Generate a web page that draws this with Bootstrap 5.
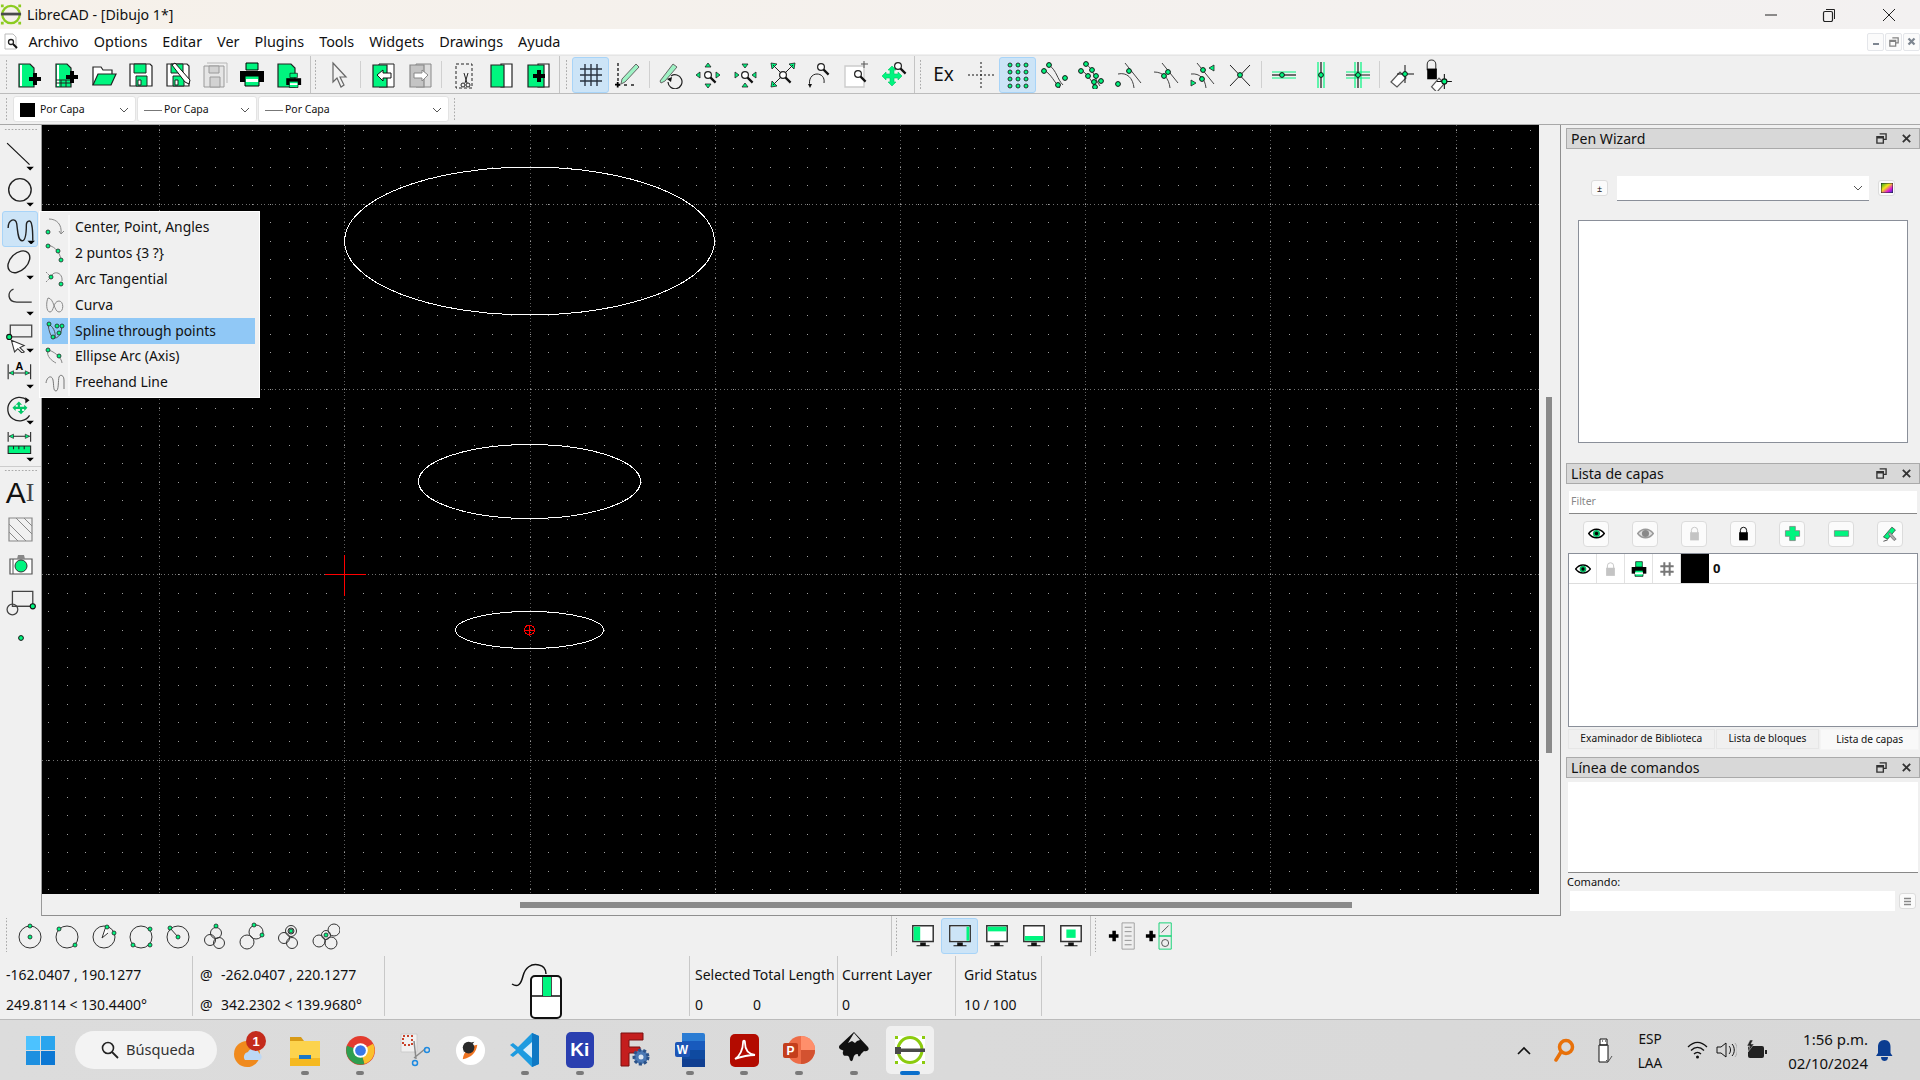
<!DOCTYPE html>
<html lang="es">
<head>
  <meta charset="UTF-8" />
  <title>LibreCAD - [Dibujo 1*]</title>
  <link href="https://cdn.jsdelivr.net/npm/bootstrap@5.3.0/dist/css/bootstrap.min.css" rel="stylesheet" />
  <style>
    html, body { height: 100%; overflow: hidden; }
    body { font-family: "Noto Sans", "Open Sans", sans-serif; font-size: 14px; color: #111; background: #f0f0f0; width: 1920px; height: 1080px; }
    svg { display: block; }
    .titlebar { height: 29px; background: linear-gradient(90deg, #f6f1ea, #f3f1f1); font-size: 14.2px; }
    .titlebar .win-title { margin-left: 5px; }
    .wctl { width: 58px; }
    .menubar { height: 25px; background: #fff; font-size: 14.4px; padding-left: 4px; gap: 15px; }
    .menu-ico { margin-right: -5.6px; }
    .subctl { width: 17px; height: 18px; border: 1px solid #e4e6ea; border-radius: 2px; margin-left: 1px; background: #fbfbfb; }
    .gapline { height: 2px; background: #f0f0f0; border-bottom: 1px solid #e5e5e5; }
    .bar1 { height: 38px; border-bottom: 1px solid #bcbcbc; padding-left: 2px; }
    .bar2 { height: 31px; border-bottom: 1px solid #a8a8a8; padding-left: 2px; }
    .grip { width: 3px; margin: 0 3px; align-self: stretch; background-image: radial-gradient(#aaa 0.8px, transparent 1px); background-size: 3px 3.4px; background-position: center; margin-top: 4px; margin-bottom: 4px; }
    .vline { width: 1px; align-self: stretch; background: #d0d0d0; margin: 5px 3px; }
    .vline.tall { margin: 0 3px; background: #c4c4c4; }
    .tbtn { width: 37px; height: 36px; padding: 0; border: 1px solid transparent; border-radius: 3px; display: flex; align-items: center; justify-content: center; flex: none; }
    .tbtn.on { background: #cce4f7; border-color: #a8d4f8; }
    .tbtn.vert { height: 36.3px; width: 36px; margin-left: 2px; }
    .tbtn.vert svg { margin-left: 2px; }
    .combo { height: 26px; background: #fff; border: 1px solid #e3e3e3; border-radius: 3px; font-size: 10.5px; padding: 2px 6px 0; margin-right: 1px; }
    .combo .swatch { width: 15px; height: 14px; background: #000; margin-right: 5px; }
    .combo .dash { width: 18px; height: 1px; background: #777; margin-right: 2px; }
    .main { height: 791px; }
    .leftbar { width: 42px; border-right: 1px solid #999; }
    .hgrip { height: 3px; margin: 3px 4px 7px; background-image: radial-gradient(#aaa 0.8px, transparent 1px); background-size: 3.4px 3px; }
    .hdiv { height: 1px; background: #fff; border-top: 1px solid #ccc; margin: 1px 0 2px; }
    .ai-glyph { font-size: 30px; font-family: "Liberation Sans", sans-serif; color: #111; line-height: 1; }
    .ai-glyph span { font-family: "Liberation Serif", serif; font-size: 26px; color: #444; }
    .cad-wrap { width: 1519px; border-right: 1px solid #8f8f8f; border-bottom: 1px solid #8f8f8f; }
    .hscroll { height: 21px; padding-left: 478px; padding-top: 8px; }
    .hthumb { width: 832px; height: 6px; background: #8a8a8a; }
    .vscroll { width: 22px; padding: 272px 0 0 7px; }
    .vthumb { width: 6px; height: 356px; background: #8a8a8a; }
    .dock { width: 354px; margin-left: 5px; padding-top: 3px; }
    .dock-title { height: 21px; background: #d8d8d8; border: 1px solid #aaa; padding: 0 7px 0 4px; font-size: 14.1px; gap: 14px; }
    .dock-title span:first-child { margin-right: auto; }
    .pen-body { height: 314px; padding-left: 12px; }
    .pen-tools { height: 71px; padding: 27px 13px 0 13px; gap: 9px; }
    .pen-tools .mini { margin-top: 4px; }
    .mini { width: 17px; height: 16px; border: 1px solid #dcdcdc; border-radius: 3px; background: #fbfbfb; font-size: 9px; line-height: 1; }
    .pen-combo { width: 252px; height: 25px; background: #fff; border-bottom: 1px solid #8a8f99; padding-right: 6px; }
    .pen-box { width: 330px; height: 223px; background: #fff; border: 1px solid #8a8f99; }
    .filter-row { padding: 7px 3px 0; }
    .filter-box { height: 23px; background: #fff; border-bottom: 1px solid #888; font-size: 10.5px; color: #888; padding-left: 2px; }
    .layer-tools { height: 39px; padding: 0 0 0 17px; gap: 23px; }
    .lbtn { width: 26px; height: 26px; border: 1px solid #dcdcdc; border-radius: 4px; background: #fbfbfb; }
    .layer-list { height: 174px; margin: 0 2px; background: #fff; border: 1px solid #8a8f99; }
    .layer-row { height: 30px; border-bottom: 1px solid #ddd; }
    .lcell { width: 28px; height: 29px; border-right: 1px solid #e2e2e2; flex: none; }
    .lcell.blk { background: #000; border: 0; }
    .lname { font-weight: 700; font-size: 13px; margin-left: 4px; }
    .dock-tabs { height: 30px; font-size: 10.2px; padding: 2px 0 0 2px; }
    .dtab { height: 20px; background: #f0f0f0; border: 1px solid #e6e6e6; margin-right: 1px; justify-content: center; }
    .dtab.act { background: #f9f9f9; height: 21px; border-color: #f4f4f4; }
    .cmd-out { height: 91px; margin: 4px 2px 0; background: #fff; border-bottom: 1px solid #888; }
    .cmd-label { font-size: 11px; height: 18px; padding: 1px 0 0 1px; }
    .cmd-in { padding-left: 4px; gap: 4px; }
    .cmd-input { width: 325px; height: 20px; background: #fff; }
    .bar3 { height: 40px; padding-left: 2px; }
    .bar3 .grip { margin-top: 2px; margin-bottom: 4px; }
    .statusbar { height: 64px; font-size: 14px; border-bottom: 1px solid #bbb; }
    .scell { height: 60px; border-right: 1px solid #c8c8c8; flex: none; padding-top: 8px; }
    .srow { height: 30px; white-space: nowrap; }
    .taskbar { height: 60px; background: linear-gradient(90deg, #dcdcdc, #d8d8d8); font-size: 14px; }
    .win-logo { margin-left: 26px; }
    .pill { width: 142px; height: 38px; background: #f3f3f3; border-radius: 19px; margin-left: 20px; margin-right: 6px; gap: 7px; padding-left: 26px; font-size: 14.6px; color: #333; }
    .tk { width: 54.9px; height: 48px; flex: none; position: relative; border-radius: 5px; }
    .tk.cur { background: #f0f0f0; width: 48px; margin-left: 4.4px; }
    .tk.run::after, .tk.cur::after { content: ""; position: absolute; bottom: -1px; left: 50%; width: 8px; height: 4px; margin-left: -4px; border-radius: 2px; background: #7a7a7a; }
    .tk.cur::after { width: 20px; margin-left: -10px; background: #0a6fcb; }
    .tray { margin-left: auto; height: 60px; }
    .lang { width: 60px; font-size: 13.6px; line-height: 24px; text-align: center; padding-top: 2px; }
    .clock { font-size: 15px; line-height: 24px; text-align: right; width: 92px; padding-top: 1px; }
    .cad-popup { position: absolute; left: 39px; top: 211px; width: 221px; height: 187px; min-width: 0; padding: 2.500px 4px 0 2px; margin: 0; background: #f0f0f0; border: 1px solid #fff; border-radius: 0; font-size: 13.9px; z-index: 5; }
    .cad-popup .dropdown-item { height: 25.9px; padding: 0; display: flex; align-items: center; color: #111; }
    .cad-popup .dropdown-item.active { background: #90c8f6; color: #111; }
    .cad-popup .pop-ico { width: 28px; height: 100%; margin-right: 5px; display: flex; align-items: center; justify-content: center; border-right: 2px solid #f8f8f8; flex: none; }
  </style>
</head>
<body class="d-flex flex-column">

<!-- icon set -->
<svg width="0" height="0" class="position-absolute">
  <defs>
    <g id="plus"><path d="M0 4h4V0h4v4h4v4H8v4H4V8H0z" fill="#000"/></g>
    <g id="mag"><circle cx="4" cy="4" r="3.4" fill="#fff" stroke="#222" stroke-width="1.2"/><path d="M6.6 6.6l5 5" stroke="#111" stroke-width="2.2"/></g>
    <g id="gd"><circle r="2.4" fill="#00f57f" stroke="#111" stroke-width="1"/></g>
    <g id="pt"><circle r="2" fill="#00f57f" stroke="#222" stroke-width=".8"/></g>
    <g id="disk"><path d="M3 3h20l2 2v20H3z" fill="#fff" stroke="#222" stroke-width="1.2"/><path d="M7 3h12v9H7z" fill="#00f57f" stroke="#222"/><path d="M9 15h11v10H9z" fill="#00f57f" stroke="#222"/><path d="M11 19h3v5h-3z" fill="#fff" stroke="#222"/></g>
    <g id="prn"><path d="M8 2h12v7H8z" fill="#00f57f" stroke="#000"/><path d="M2 10h24v11H2z" fill="#000"/><path d="M7 15h14v10H7z" fill="#00f57f" stroke="#000"/><path d="M8 18h12v3H8z" fill="#fff"/></g>
    <g id="page"><path d="M3 3h11l4 4v19H3z" fill="#00f57f" stroke="#222" stroke-width="1.2"/><path d="M4 4h2v21H4z" fill="#fff"/></g>
    <g id="mon"><path d="M3 3h22v17H3z" fill="#fff" stroke="#333" stroke-width="1.6"/><path d="M11 21h6v3h4v1H7v-1h4z" fill="#111"/></g>

    <symbol id="i-new" viewBox="0 0 28 28"><use href="#page"/><use href="#plus" x="13" y="12"/></symbol>
    <symbol id="i-tpl" viewBox="0 0 28 28"><use href="#page"/><path d="M3 19h15M3 22h15M8 19v7M13 19v7" stroke="#222" fill="none"/><use href="#plus" x="13" y="10"/></symbol>
    <symbol id="i-open" viewBox="0 0 28 28"><path d="M3 24V6h8l2 3h9v4" fill="#fff" stroke="#222" stroke-width="1.2"/><path d="M3 24l5-11h18l-5 11z" fill="#00f57f" stroke="#222" stroke-width="1.2"/></symbol>
    <symbol id="i-save" viewBox="0 0 28 28"><use href="#disk"/></symbol>
    <symbol id="i-saveas" viewBox="0 0 28 28"><use href="#disk"/><path d="M8 4l3-2 15 17-1 4-4-2z" fill="#fff" stroke="#111"/></symbol>
    <symbol id="i-saveall" viewBox="0 0 28 28"><g opacity=".55"><path d="M6 2h20v20" fill="none" stroke="#888"/><path d="M3 5h20v21H3z" fill="#ddd" stroke="#555"/><path d="M8 5h10v7H8zM9 16h10v10H9z" fill="#bbb" stroke="#555"/></g></symbol>
    <symbol id="i-print" viewBox="0 0 28 28"><use href="#prn"/></symbol>
    <symbol id="i-prev" viewBox="0 0 28 28"><path d="M3 3h13l4 4v19H3z" fill="#00f57f" stroke="#222" stroke-width="1.2"/><g transform="translate(10 11) scale(.62)"><use href="#prn"/></g></symbol>
    <symbol id="i-cur" viewBox="0 0 28 28"><path d="M8 2l13 14h-6l4 8-3 2-4-9-4 4z" fill="#f2f2f2" stroke="#666" stroke-width="1.2"/></symbol>
    <symbol id="i-tabp" viewBox="0 0 28 28"><path d="M10 3h15v23H10z" fill="#fff" stroke="#222"/><path d="M4 4h14v22H4z" fill="#00f57f" stroke="#222" stroke-width="1.2"/><path d="M8 14l6-5v3h8v5h-8v3z" fill="#fff" stroke="#111"/></symbol>
    <symbol id="i-tabn" viewBox="0 0 28 28"><path d="M10 3h15v23H10z" fill="#ddd" stroke="#888"/><path d="M4 4h14v22H4z" fill="#c4c4c4" stroke="#888" stroke-width="1.2"/><path d="M22 14l-6-5v3H8v5h8v3z" fill="#fff" stroke="#888"/></symbol>
    <symbol id="i-cut" viewBox="0 0 28 28"><path d="M6 3h16v24H6z" fill="none" stroke="#222" stroke-dasharray="3 2"/><path d="M14 12l3 10M18 12l-3 10" stroke="#222"/><circle cx="13" cy="24" r="2" fill="none" stroke="#222"/><circle cx="18" cy="24" r="2" fill="none" stroke="#222"/></symbol>
    <symbol id="i-copy" viewBox="0 0 28 28"><path d="M14 3h11v23H14z" fill="#fff" stroke="#222" stroke-width="1.2"/><path d="M4 4h13v22H4z" fill="#00f57f" stroke="#222" stroke-width="1.2"/></symbol>
    <symbol id="i-paste" viewBox="0 0 28 28"><path d="M14 3h11v23H14z" fill="#fff" stroke="#222" stroke-width="1.2"/><path d="M4 4h16v22H4z" fill="#00f57f" stroke="#222" stroke-width="1.2"/><use href="#plus" x="9" y="9"/></symbol>
    <symbol id="i-grid" viewBox="0 0 28 28"><path d="M8 3v22M14 3v22M20 3v22M3 8h22M3 14h22M3 20h22" stroke="#2a3340" stroke-width="1.4"/></symbol>
    <symbol id="i-draft" viewBox="0 0 28 28"><path d="M4 2v18M4 24h2M10 24h3M17 24h4" stroke="#222" stroke-width="1.4" stroke-dasharray="3 2" fill="none"/><path d="M8 18L22 3l3 3L11 21l-4 2z" fill="#9ef2c4" stroke="#666"/><use href="#plus" transform="translate(1 21) scale(.45)"/></symbol>
    <symbol id="i-redraw" viewBox="0 0 28 28"><path d="M2 20L15 3l4 3L7 20l-4 2z" fill="#9ef2c4" stroke="#666"/><path d="M13 15a7 7 0 1 1-3 6" fill="none" stroke="#222" stroke-width="1.2"/><path d="M9 18l5-2-1 5z" fill="#111"/></symbol>
    <symbol id="i-zin" viewBox="0 0 28 28"><path d="M13 2l-3 4h6zM13 27l-3-4h6zM1 14l4-3v6zM25 14l-4-3v6z" fill="#00f57f" stroke="#222" stroke-width=".8"/><g transform="translate(9 10)"><use href="#mag"/></g></symbol>
    <symbol id="i-zout" viewBox="0 0 28 28"><path d="M13 7l-3-4h6zM13 22l-3 4h6zM7 14l-4-3v6zM20 14l4-3v6z" fill="#00f57f" stroke="#222" stroke-width=".8"/><g transform="translate(9 10)"><use href="#mag"/></g></symbol>
    <symbol id="i-zauto" viewBox="0 0 28 28"><path d="M2 2l6 1-5 5zM26 2l-6 1 5 5zM2 26l1-6 5 5z" fill="#00f57f" stroke="#222" stroke-width=".8"/><path d="M4 4l7 7M24 4l-7 7M4 24l7-7" stroke="#222"/><g transform="translate(10 10)"><use href="#mag"/></g></symbol>
    <symbol id="i-zprev" viewBox="0 0 28 28"><path d="M4 25c-2-7 2-12 7-12 4 0 8 3 7 9" fill="none" stroke="#222"/><path d="M2 23h4l-2 4z" fill="#111"/><g transform="translate(11 2)"><use href="#mag"/></g></symbol>
    <symbol id="i-zwin" viewBox="0 0 28 28"><path d="M2 5h19v21H2z" fill="#fff" stroke="#ccc" stroke-width="1.4"/><path d="M21 0v7M18 3h7" stroke="#555"/><g transform="translate(11 9)"><use href="#mag"/></g></symbol>
    <symbol id="i-zpan" viewBox="0 0 28 28"><path d="M11 8l4 4h-2v4h4v-2l4 4-4 4v-2h-4v4h2l-4 4-4-4h2v-4H5v2l-4-4 4-4v2h4v-4H7z" fill="#00f57f" stroke="#00c866" stroke-width=".6" transform="translate(1 -3)"/><g transform="translate(14 1)"><use href="#mag"/></g></symbol>
    <symbol id="i-cross" viewBox="0 0 28 28"><path d="M14 1v26M1 14h26" stroke="#111" stroke-dasharray="2 2"/></symbol>
    <symbol id="i-snapg" viewBox="0 0 28 28"><g fill="#00f57f" stroke="#222" stroke-width=".9"><circle cx="6" cy="4" r="2"/><circle cx="14" cy="4" r="2"/><circle cx="22" cy="4" r="2"/><circle cx="6" cy="11" r="2"/><circle cx="14" cy="11" r="2"/><circle cx="22" cy="11" r="2"/><circle cx="6" cy="18" r="2"/><circle cx="14" cy="18" r="2"/><circle cx="22" cy="18" r="2"/><circle cx="6" cy="25" r="2"/><circle cx="14" cy="25" r="2"/><circle cx="22" cy="25" r="2"/></g></symbol>
    <symbol id="i-sn1" viewBox="0 0 28 28"><path d="M8 4c8 6 8 14 14 20M3 9c8 5 10 12 16 18" fill="none" stroke="#444"/><use href="#gd" x="8" y="4"/><use href="#gd" x="3" y="10"/><use href="#gd" x="24" y="17"/><use href="#gd" x="17" y="24"/></symbol>
    <symbol id="i-sn2" viewBox="0 0 28 28"><path d="M8 3c8 6 8 14 14 22M3 9c8 5 10 12 16 18" fill="none" stroke="#444"/><use href="#gd" x="8" y="3"/><use href="#gd" x="3" y="10"/><use href="#gd" x="14" y="9"/><use href="#gd" x="10" y="15"/><use href="#gd" x="18" y="15"/><use href="#gd" x="16" y="21"/><use href="#gd" x="23" y="20"/><use href="#gd" x="17" y="26"/></symbol>
    <symbol id="i-sn3" viewBox="0 0 28 28"><path d="M10 2l16 20M3 13c9-2 15 4 16 14" fill="none" stroke="#444"/><use href="#gd" x="14" y="10"/><use href="#gd" x="3" y="23"/></symbol>
    <symbol id="i-sn4" viewBox="0 0 28 28"><path d="M10 2l16 20M2 11c9 0 15 6 16 16" fill="none" stroke="#444"/><use href="#gd" x="16" y="11"/><use href="#gd" x="12" y="15"/></symbol>
    <symbol id="i-sn5" viewBox="0 0 28 28"><path d="M8 2l17 21M2 13c9-1 14 5 15 14" fill="none" stroke="#444"/><use href="#gd" x="14" y="9"/><use href="#gd" x="13" y="18"/><path d="M25 4l-5 3 5 3zM2 19l5 3-5 3z" fill="#00f57f" stroke="#222" stroke-width=".8"/></symbol>
    <symbol id="i-sn6" viewBox="0 0 28 28"><path d="M4 4l20 21M24 4L4 25" stroke="#222"/><use href="#gd" x="14" y="14"/></symbol>
    <symbol id="i-rh" viewBox="0 0 28 28"><path d="M2 11h24M2 17h24" stroke="#00f57f" stroke-width="1.2"/><path d="M2 14h24" stroke="#111" stroke-width="1.2"/><use href="#gd" x="12" y="14"/></symbol>
    <symbol id="i-rv" viewBox="0 0 28 28"><path d="M11 1v26M17 1v26" stroke="#00f57f" stroke-width="1.2"/><path d="M14 1v26" stroke="#111" stroke-width="1.2"/><use href="#gd" x="14" y="14"/></symbol>
    <symbol id="i-rc" viewBox="0 0 28 28"><path d="M2 11h24M2 17h24M11 1v26M17 1v26" stroke="#00f57f" stroke-width="1.2"/><path d="M2 14h24M14 1v26" stroke="#111" stroke-width="1.2"/><use href="#gd" x="14" y="14"/></symbol>
    <symbol id="i-rel" viewBox="0 0 28 28"><path d="M3 21l9-10 6 6-9 9z" fill="#fff" stroke="#555" stroke-width="1.2"/><path d="M17 4v18M9 13h17" stroke="#111"/><use href="#gd" x="17" y="13"/></symbol>
    <symbol id="i-rell" viewBox="0 0 28 28"><path d="M3 2a4 4 0 0 1 8 0v5H3z" fill="none" stroke="#333" transform="translate(0 2)"/><path d="M3 8h9v10H3z" fill="#000"/><path d="M7 25l7-8 5 5-7 8z" fill="#fff" stroke="#555" stroke-width="1.1"/><path d="M19 13v14M12 20h14" stroke="#111"/><use href="#gd" x="19" y="20"/></symbol>

    <symbol id="v-line" viewBox="0 0 28 28"><path d="M1 2l21 20" stroke="#111" stroke-width="1.1"/><path d="M19 24h7l-3.500 3.500z" fill="#000"/></symbol>
    <symbol id="v-circ" viewBox="0 0 28 28"><circle cx="13" cy="12" r="10.500" fill="none" stroke="#222" stroke-width="1.3"/><path d="M19 24h7l-3.500 3.500z" fill="#000"/></symbol>
    <symbol id="v-spl" viewBox="0 0 28 28"><path d="M2 13c0-8 7-10 8-4 1 7 1 16 5 16 4 0 4-12 4-15s4-6 5 0c1 4 1 11 1 15" fill="none" stroke="#222" stroke-width="1.3"/><path d="M20 25h7l-3.500 3.500z" fill="#000"/></symbol>
    <symbol id="v-ell" viewBox="0 0 28 28"><ellipse cx="12" cy="11" rx="12" ry="8" transform="rotate(-45 12 11)" fill="none" stroke="#222" stroke-width="1.3"/><path d="M19 24h7l-3.500 3.500z" fill="#000"/></symbol>
    <symbol id="v-poly" viewBox="0 0 28 28"><path d="M7 3c-6 2-6 12 3 12h14" fill="none" stroke="#333" stroke-width="1.3"/><path d="M19 24h7l-3.500 3.500z" fill="#000"/></symbol>
    <symbol id="v-sel" viewBox="0 0 28 28"><path d="M4 2h20v11H4z" fill="none" stroke="#444" stroke-width="1.2"/><use href="#gd" x="3" y="13"/><path d="M5 16l12 5-4 2 4 4-2 1-4-4-3 3z" fill="#fff" stroke="#333"/><path d="M19 24h7l-3.500 3.500z" fill="#000"/></symbol>
    <symbol id="v-dim" viewBox="0 0 28 28"><path d="M2 5v14M23 5v14M3 13h19" stroke="#222" fill="none"/><path d="M3 13l4-2v4zM22 13l-4-2v4z" fill="#00f57f" stroke="#222" stroke-width=".6"/><text x="12.500" y="10" font-size="10" font-weight="700" text-anchor="middle" font-family="Liberation Sans">A</text><path d="M19 24h7l-3.500 3.500z" fill="#000"/></symbol>
    <symbol id="v-mod" viewBox="0 0 28 28"><path d="M20 5A11 11 0 1 0 22 19" fill="none" stroke="#222" stroke-width="1.2"/><path d="M18 2l4 3-4 3z" fill="#111"/><path d="M12 6l3 3h-2v2h2v-2l0 2h2v-2l3 3-3 3v-2h-2v2h2l-3 3-3-3h2v-2H9v2l-3-3 3-3v2h2V9H9z" fill="#00c866"/><path d="M19 24h7l-3.500 3.500z" fill="#000"/></symbol>
    <symbol id="v-meas" viewBox="0 0 28 28"><path d="M2 0v9M23 0v9M3 4h19" stroke="#222" fill="none"/><path d="M3 4l4-2v4zM22 4l-4-2v4z" fill="#00f57f" stroke="#222" stroke-width=".6"/><path d="M2 13h21v7H2z" fill="#00f57f" stroke="#222"/><path d="M7 13v3M12 13v3M17 13v3" stroke="#222"/><path d="M19 24h7l-3.500 3.500z" fill="#000"/></symbol>
    <symbol id="v-hatch" viewBox="0 0 28 28"><path d="M2 3h23v23H2z" fill="none" stroke="#888" stroke-width="1.2"/><path d="M2 9l17 17M2 17l9 9M9 3l16 16M17 3l8 8" stroke="#888"/></symbol>
    <symbol id="v-img" viewBox="0 0 28 28"><path d="M3 8h22v15H3z" fill="#fff" stroke="#555" stroke-width="1.2"/><path d="M11 4h6l1 4h-8z" fill="#888"/><circle cx="14" cy="15" r="6" fill="#00f57f" stroke="#333"/><path d="M6 8v15" stroke="#555"/></symbol>
    <symbol id="v-blk" viewBox="0 0 28 28"><path d="M6 4h19v14H6z" fill="none" stroke="#444" stroke-width="1.2"/><circle cx="6" cy="21" r="5" fill="none" stroke="#444" stroke-width="1.2"/><path d="M6 18h19" stroke="#444"/><use href="#gd" x="25" y="18"/></symbol>
    <symbol id="v-pt" viewBox="0 0 28 28"><use href="#gd" x="14" y="14"/></symbol>

    <symbol id="c1" viewBox="0 0 28 28"><circle cx="14" cy="15" r="11" fill="none" stroke="#333"/><use href="#pt" x="14" y="15"/><use href="#pt" x="14" y="4"/></symbol>
    <symbol id="c2" viewBox="0 0 28 28"><circle cx="14" cy="15" r="11" fill="none" stroke="#333"/><use href="#pt" x="6" y="7"/><use href="#pt" x="22" y="23"/></symbol>
    <symbol id="c3" viewBox="0 0 28 28"><circle cx="14" cy="15" r="11" fill="none" stroke="#333"/><path d="M16 4l-4 12 6-5" fill="#fff" stroke="#333"/><use href="#pt" x="17" y="5"/><use href="#pt" x="24" y="11"/></symbol>
    <symbol id="c4" viewBox="0 0 28 28"><circle cx="14" cy="15" r="11" fill="none" stroke="#333"/><use href="#pt" x="23" y="7"/><use href="#pt" x="6" y="23"/><use href="#pt" x="23" y="23"/></symbol>
    <symbol id="c5" viewBox="0 0 28 28"><circle cx="14" cy="15" r="11" fill="none" stroke="#333"/><path d="M6 6l8 9" stroke="#333"/><use href="#pt" x="6" y="6"/><use href="#pt" x="14" y="15"/></symbol>
    <symbol id="c6" viewBox="0 0 28 28"><g fill="none" stroke="#333"><circle cx="15" cy="11" r="5.500"/><circle cx="9" cy="18" r="5.500"/><circle cx="18" cy="21" r="5.500"/></g><use href="#pt" x="15" y="4"/></symbol>
    <symbol id="c7" viewBox="0 0 28 28"><g fill="none" stroke="#333"><circle cx="9" cy="20" r="7"/><circle cx="18" cy="10" r="7"/></g><use href="#pt" x="16" y="3"/><use href="#pt" x="24" y="13"/></symbol>
    <symbol id="c8" viewBox="0 0 28 28"><g fill="none" stroke="#333"><circle cx="16" cy="9" r="5.500"/><circle cx="16" cy="9" r="3"/><circle cx="9" cy="16" r="5.500"/><circle cx="17" cy="21" r="5.500"/></g><use href="#pt" x="16" y="9"/></symbol>
    <symbol id="c9" viewBox="0 0 28 28"><g fill="none" stroke="#333"><circle cx="22" cy="8" r="6"/><circle cx="7" cy="19" r="6"/><circle cx="19" cy="21" r="6"/><circle cx="14" cy="13" r="4.500"/></g><use href="#pt" x="14" y="13"/></symbol>

    <symbol id="m-left" viewBox="0 0 28 28"><use href="#mon"/><path d="M4 4h7v15H4z" fill="#00f57f"/></symbol>
    <symbol id="m-right" viewBox="0 0 28 28"><use href="#mon"/><path d="M4 4h20v15H4z" fill="#cce4f7"/><path d="M21 4h3v15h-3z" fill="#00f57f"/></symbol>
    <symbol id="m-top" viewBox="0 0 28 28"><use href="#mon"/><path d="M4 4h20v5H4z" fill="#00f57f"/></symbol>
    <symbol id="m-bot" viewBox="0 0 28 28"><use href="#mon"/><path d="M4 14h20v5H4z" fill="#00f57f"/></symbol>
    <symbol id="m-ctr" viewBox="0 0 28 28"><use href="#mon"/><path d="M9 7h10v9H9z" fill="#00f57f"/></symbol>
    <symbol id="a-list" viewBox="0 0 32 32"><path d="M1 12h4V8h4v4h3v4H9v4H5v-4H1z" fill="#000" transform="translate(0 2)"/><path d="M16 1h14v30H16z" fill="#eee" stroke="#999"/><path d="M19 6h8M19 11h8M19 16h8M19 21h8M19 26h8" stroke="#888"/></symbol>
    <symbol id="a-tb" viewBox="0 0 32 32"><path d="M1 12h4V8h4v4h3v4H9v4H5v-4H1z" fill="#000" transform="translate(0 2)"/><path d="M16 1h14v15H16zM16 16h14v15H16z" fill="#eee" stroke="#00d06a"/><path d="M19 12l8-8" stroke="#444"/><circle cx="23" cy="24" r="4" fill="none" stroke="#444"/></symbol>

    <symbol id="p-arc" viewBox="0 0 20 20"><path d="M4 2c8 0 13 6 12 14" fill="none" stroke="#888"/><path d="M14 14l2 3 3-3" fill="none" stroke="#888"/><use href="#pt" x="3" y="15"/></symbol>
    <symbol id="p-2p" viewBox="0 0 20 20"><path d="M3 2c8 2 12 8 13 15" fill="none" stroke="#888"/><use href="#pt" x="3" y="3"/><use href="#pt" x="13" y="8"/><use href="#pt" x="16" y="17"/></symbol>
    <symbol id="p-tan" viewBox="0 0 20 20"><path d="M1 3l5 5M1 13l5-5" stroke="#888" stroke-dasharray="2 1"/><path d="M6 8c2-7 12-5 11 4" fill="none" stroke="#888"/><use href="#pt" x="6" y="8"/><use href="#pt" x="16" y="15"/></symbol>
    <symbol id="p-curv" viewBox="0 0 20 20"><path d="M3 3c6 0 6 14 11 14 5 0 5-11 0-11-6 0-5 11-9 11S1 7 3 3z" fill="none" stroke="#888"/></symbol>
    <symbol id="p-spl" viewBox="0 0 20 20"><path d="M3 3c1 8 3 14 7 14S18 10 16 5" fill="none" stroke="#555"/><path d="M3 3c5 2 8 8 7 14" fill="none" stroke="#555"/><use href="#pt" x="4" y="3"/><use href="#pt" x="12" y="5"/><use href="#pt" x="17" y="5"/><use href="#pt" x="8" y="16"/><use href="#pt" x="14" y="12"/></symbol>
    <symbol id="p-ela" viewBox="0 0 20 20"><path d="M2 3c6 0 15 8 15 13" fill="none" stroke="#888"/><path d="M3 4c-2 5 4 10 8 12" fill="none" stroke="#888"/><use href="#pt" x="3" y="3"/><use href="#pt" x="14" y="9"/></symbol>
    <symbol id="p-free" viewBox="0 0 20 20"><path d="M1 10c1-7 6-8 7-3s0 11 3 11 2-11 3-14 5-2 5 3v9" fill="none" stroke="#777"/></symbol>

    <symbol id="l-eye" viewBox="0 0 24 24"><path d="M1 12c6-8 16-8 22 0-6 8-16 8-22 0z" fill="#fff" stroke="#000" stroke-width="2"/><circle cx="12" cy="12" r="5" fill="#00b860"/><circle cx="12" cy="12" r="2.500" fill="#000"/></symbol>
    <symbol id="l-eyeg" viewBox="0 0 24 24"><path d="M1 12c6-8 16-8 22 0-6 8-16 8-22 0z" fill="#ddd" stroke="#999" stroke-width="2"/><circle cx="12" cy="12" r="5" fill="#888"/></symbol>
    <symbol id="l-lockg" viewBox="0 0 24 24"><path d="M7 11V7a5 5 0 0 1 10 0v4" fill="none" stroke="#c4c4c4" stroke-width="1.500"/><path d="M5 10h14v13H5z" fill="#c4c4c4"/></symbol>
    <symbol id="l-lock" viewBox="0 0 24 24"><path d="M7 11V7a5 5 0 0 1 10 0v4" fill="none" stroke="#000" stroke-width="1.500"/><path d="M5 10h14v13H5z" fill="#000"/></symbol>
    <symbol id="l-add" viewBox="0 0 24 24"><path d="M8 2h8v6h6v8h-6v6H8v-6H2V8h6z" fill="#00f57f" stroke="#777"/></symbol>
    <symbol id="l-rem" viewBox="0 0 24 24"><path d="M2 8h20v8H2z" fill="#00f57f" stroke="#777"/></symbol>
    <symbol id="l-edit" viewBox="0 0 24 24"><path d="M2 17L14 3l5 4-11 13z" fill="#00f57f" stroke="#333"/><path d="M11 10l9 10-3 2-8-9z" fill="#aaa" stroke="#666"/><path d="M2 23l6-2" stroke="#111"/></symbol>
    <symbol id="l-prn" viewBox="0 0 24 24"><path d="M7 1h10v8H7z" fill="#00f57f" stroke="#000"/><path d="M1 9h22v10H1z" fill="#000"/><path d="M6 14h12v9H6z" fill="#00f57f" stroke="#000"/><path d="M6 17h12v3H6z" fill="#fff"/></symbol>
    <symbol id="l-hash" viewBox="0 0 24 24"><path d="M8 2v20M16 2v20M2 8h20M2 16h20" stroke="#777" stroke-width="3"/></symbol>
    <symbol id="d-float" viewBox="0 0 12 12"><path d="M4 1h7v6H8" fill="none" stroke="#333" stroke-width="1.500"/><path d="M1 4h7v7H1z" fill="none" stroke="#333" stroke-width="1.500"/><path d="M1 5h7" stroke="#333" stroke-width="2"/></symbol>
    <symbol id="d-close" viewBox="0 0 12 12"><path d="M2 2l8 8M10 2l-8 8" stroke="#333" stroke-width="2"/></symbol>
  </defs>
</svg>

<!-- title bar -->
<header class="titlebar d-flex align-items-center">
  <svg width="22" height="23" viewBox="0 0 24 24"><circle cx="12" cy="12" r="9.500" fill="none" stroke="#8ccb1f" stroke-width="2.500"/><path d="M1 10h22v3H1z" fill="#4a4a4a"/><path d="M1 1h3v3H1zM20 1h3v3h-3zM1 20h3v3H1zM20 20h3v3h-3z" fill="#8ccb1f"/></svg>
  <span class="win-title">LibreCAD - [Dibujo 1*]</span>
  <div class="ms-auto d-flex">
    <div class="wctl d-flex justify-content-center"><svg width="14" height="14" viewBox="0 0 14 14"><path d="M1 7h12" stroke="#222"/></svg></div>
    <div class="wctl d-flex justify-content-center"><svg width="14" height="14" viewBox="0 0 14 14"><path d="M4 1.500h8.500V11" fill="none" stroke="#222"/><rect x="1.500" y="3.500" width="9" height="10" rx="1.500" fill="none" stroke="#222" stroke-width="1.200"/></svg></div>
    <div class="wctl d-flex justify-content-center" style="width:62px"><svg width="14" height="14" viewBox="0 0 14 14"><path d="M1 1l12 12M13 1L1 13" stroke="#222"/></svg></div>
  </div>
</header>

<!-- menu bar -->
<div class="menubar d-flex align-items-center">
  <svg class="menu-ico" width="15" height="17" viewBox="0 0 15 17"><path d="M1 1h8l3 3v12H1z" fill="#fff" stroke="#bbb"/><circle cx="7" cy="9" r="2.500" fill="none" stroke="#222" stroke-width="1.300"/><path d="M9 11l4 4" stroke="#111" stroke-width="2"/></svg>
  <span>Archivo</span><span>Options</span><span>Editar</span><span>Ver</span><span>Plugins</span><span>Tools</span><span>Widgets</span><span>Drawings</span><span>Ayuda</span>
  <div class="ms-auto d-flex">
    <div class="subctl d-flex align-items-end justify-content-center pb-1"><svg width="8" height="3"><path d="M1 1h6" stroke="#7d8590" stroke-width="2"/></svg></div>
    <div class="subctl d-flex align-items-center justify-content-center"><svg width="10" height="10" viewBox="0 0 12 12"><use href="#d-float" opacity=".6"/></svg></div>
    <div class="subctl d-flex align-items-center justify-content-center"><svg width="9" height="9" viewBox="0 0 12 12"><path d="M2 2l8 8M10 2l-8 8" stroke="#7d8590" stroke-width="3"/></svg></div>
  </div>
</div>
<div class="gapline"></div>

<!-- main toolbar -->
<div class="bar1 d-flex align-items-center">
  <span class="grip"></span>
  <button class="btn tbtn"><svg width="28" height="28"><use href="#i-new"/></svg></button>
  <button class="btn tbtn"><svg width="28" height="28"><use href="#i-tpl"/></svg></button>
  <button class="btn tbtn"><svg width="28" height="28"><use href="#i-open"/></svg></button>
  <button class="btn tbtn"><svg width="28" height="28"><use href="#i-save"/></svg></button>
  <button class="btn tbtn"><svg width="28" height="28"><use href="#i-saveas"/></svg></button>
  <button class="btn tbtn"><svg width="28" height="28"><use href="#i-saveall"/></svg></button>
  <button class="btn tbtn"><svg width="28" height="28"><use href="#i-print"/></svg></button>
  <button class="btn tbtn"><svg width="28" height="28"><use href="#i-prev"/></svg></button>
  <span class="vline tall"></span><span class="grip" style="margin:4px 3px 4px 0"></span>
  <button class="btn tbtn"><svg width="28" height="28"><use href="#i-cur"/></svg></button>
  <span class="vline"></span>
  <button class="btn tbtn"><svg width="28" height="28"><use href="#i-tabp"/></svg></button>
  <button class="btn tbtn"><svg width="28" height="28"><use href="#i-tabn"/></svg></button>
  <span class="vline"></span>
  <button class="btn tbtn"><svg width="28" height="28"><use href="#i-cut"/></svg></button>
  <button class="btn tbtn"><svg width="28" height="28"><use href="#i-copy"/></svg></button>
  <button class="btn tbtn"><svg width="28" height="28"><use href="#i-paste"/></svg></button>
  <span class="vline tall" style="margin:0 2px 0 3px"></span><span class="grip" style="margin:4px 4px 4px 3px"></span>
  <button class="btn tbtn on"><svg width="28" height="28"><use href="#i-grid"/></svg></button>
  <button class="btn tbtn"><svg width="28" height="28"><use href="#i-draft"/></svg></button>
  <span class="vline" style="margin:5px 3px"></span>
  <button class="btn tbtn"><svg width="28" height="28"><use href="#i-redraw"/></svg></button>
  <button class="btn tbtn"><svg width="28" height="28"><use href="#i-zin"/></svg></button>
  <button class="btn tbtn"><svg width="28" height="28"><use href="#i-zout"/></svg></button>
  <button class="btn tbtn"><svg width="28" height="28"><use href="#i-zauto"/></svg></button>
  <button class="btn tbtn"><svg width="28" height="28"><use href="#i-zprev"/></svg></button>
  <button class="btn tbtn"><svg width="28" height="28"><use href="#i-zwin"/></svg></button>
  <button class="btn tbtn"><svg width="28" height="28"><use href="#i-zpan"/></svg></button>
  <span class="vline tall" style="margin:0 2px"></span><span class="grip" style="margin:4px 3px 4px 2px"></span>
  <button class="btn tbtn" style="font-size:19px;color:#111">Ex</button>
  <button class="btn tbtn"><svg width="28" height="28"><use href="#i-cross"/></svg></button>
  <button class="btn tbtn on"><svg width="28" height="28"><use href="#i-snapg"/></svg></button>
  <button class="btn tbtn"><svg width="28" height="28"><use href="#i-sn1"/></svg></button>
  <button class="btn tbtn"><svg width="28" height="28"><use href="#i-sn2"/></svg></button>
  <button class="btn tbtn"><svg width="28" height="28"><use href="#i-sn3"/></svg></button>
  <button class="btn tbtn"><svg width="28" height="28"><use href="#i-sn4"/></svg></button>
  <button class="btn tbtn"><svg width="28" height="28"><use href="#i-sn5"/></svg></button>
  <button class="btn tbtn"><svg width="28" height="28"><use href="#i-sn6"/></svg></button>
  <span class="vline" style="margin:5px 3px"></span>
  <button class="btn tbtn"><svg width="28" height="28"><use href="#i-rh"/></svg></button>
  <button class="btn tbtn"><svg width="28" height="28"><use href="#i-rv"/></svg></button>
  <button class="btn tbtn"><svg width="28" height="28"><use href="#i-rc"/></svg></button>
  <span class="vline" style="margin:5px 3px"></span>
  <button class="btn tbtn"><svg width="28" height="28"><use href="#i-rel"/></svg></button>
  <button class="btn tbtn"><svg width="30" height="32"><use href="#i-rell"/></svg></button>
</div>

<!-- pen toolbar -->
<div class="bar2 d-flex align-items-center">
  <span class="grip"></span>
  <div class="combo d-flex align-items-center" style="width:123px;margin-left:2px"><span class="swatch"></span>Por Capa<svg class="ms-auto" width="10" height="6" viewBox="0 0 10 6"><path d="M1 1l4 4 4-4" fill="none" stroke="#555"/></svg></div>
  <div class="combo d-flex align-items-center" style="width:120px"><span class="dash"></span>Por Capa<svg class="ms-auto" width="10" height="6" viewBox="0 0 10 6"><path d="M1 1l4 4 4-4" fill="none" stroke="#555"/></svg></div>
  <div class="combo d-flex align-items-center" style="width:191px"><span class="dash"></span>Por Capa<svg class="ms-auto" width="10" height="6" viewBox="0 0 10 6"><path d="M1 1l4 4 4-4" fill="none" stroke="#555"/></svg></div>
  <span class="grip"></span>
</div>

<!-- work area -->
<div class="main d-flex">
  <div class="leftbar flex-none">
    <div class="hgrip"></div>
    <button class="btn tbtn vert"><svg width="30" height="30"><use href="#v-line"/></svg></button>
    <button class="btn tbtn vert"><svg width="30" height="30"><use href="#v-circ"/></svg></button>
    <button class="btn tbtn vert on"><svg width="30" height="30"><use href="#v-spl"/></svg></button>
    <button class="btn tbtn vert"><svg width="30" height="30"><use href="#v-ell"/></svg></button>
    <button class="btn tbtn vert"><svg width="30" height="30"><use href="#v-poly"/></svg></button>
    <button class="btn tbtn vert"><svg width="30" height="30"><use href="#v-sel"/></svg></button>
    <button class="btn tbtn vert"><svg width="30" height="30"><use href="#v-dim"/></svg></button>
    <button class="btn tbtn vert"><svg width="30" height="30"><use href="#v-mod"/></svg></button>
    <button class="btn tbtn vert"><svg width="30" height="30"><use href="#v-meas"/></svg></button>
    <div class="hdiv"></div>
    <div class="hgrip" style="margin:2px 4px 3px"></div>
    <button class="btn tbtn vert ai-glyph">A<span>I</span></button>
    <button class="btn tbtn vert"><svg width="28" height="28"><use href="#v-hatch"/></svg></button>
    <button class="btn tbtn vert"><svg width="28" height="28"><use href="#v-img"/></svg></button>
    <button class="btn tbtn vert"><svg width="30" height="30"><use href="#v-blk"/></svg></button>
    <button class="btn tbtn vert"><svg width="28" height="28"><use href="#v-pt"/></svg></button>
  </div>

  <div class="cad-wrap d-flex">
    <div class="d-flex flex-column">
      <svg width="1497" height="769" viewBox="0 0 1497 769">
        <rect width="1497" height="769" fill="#000"/>
        <path id="gridMinor" fill="#a0a0a0" shape-rendering="crispEdges"/>
        <path id="gridMajV" fill="#5e5e5e" shape-rendering="crispEdges"/>
        <path id="gridMajH" fill="#6e6e6e" shape-rendering="crispEdges"/>
        <g fill="none" stroke="#fff" shape-rendering="crispEdges">
          <ellipse cx="487.500" cy="116" rx="185" ry="74"/>
          <ellipse cx="487.500" cy="356.500" rx="111" ry="37"/>
          <ellipse cx="487.500" cy="505" rx="74" ry="18.500"/>
        </g>
        <g fill="none" stroke="#f00" shape-rendering="crispEdges">
          <path d="M282.500 449.500h41M302.500 429.500v41"/>
          <circle cx="487.500" cy="505" r="5"/>
          <path d="M482 505h11M487.500 500v11"/>
        </g>
      </svg>
      <div class="hscroll"><div class="hthumb"></div></div>
    </div>
    <div class="vscroll"><div class="vthumb"></div></div>
  </div>

  <aside class="dock">
    <div class="dock-title d-flex align-items-center"><span>Pen Wizard</span><svg width="11" height="11"><use href="#d-float"/></svg><svg width="11" height="11"><use href="#d-close"/></svg></div>
    <div class="pen-body">
      <div class="pen-tools d-flex align-items-start">
        <div class="mini d-flex align-items-center justify-content-center">±</div>
        <div class="pen-combo d-flex align-items-center justify-content-end"><svg width="10" height="6" viewBox="0 0 10 6"><path d="M1 1l4 4 4-4" fill="none" stroke="#555"/></svg></div>
        <div class="mini d-flex align-items-center justify-content-center"><svg width="12" height="10"><defs><linearGradient id="rb" x1="0" y1="0" x2="1" y2="1"><stop offset="0" stop-color="#1a9c2c"/><stop offset=".4" stop-color="#f3e514"/><stop offset=".7" stop-color="#e21ad0"/><stop offset="1" stop-color="#2030e0"/></linearGradient></defs><rect width="12" height="10" fill="url(#rb)" stroke="#222"/></svg></div>
      </div>
      <div class="pen-box"></div>
    </div>

    <div class="dock-title d-flex align-items-center"><span>Lista de capas</span><svg width="11" height="11"><use href="#d-float"/></svg><svg width="11" height="11"><use href="#d-close"/></svg></div>
    <div class="filter-row"><div class="filter-box d-flex align-items-center">Filter</div></div>
    <div class="layer-tools d-flex align-items-center">
      <div class="lbtn d-flex align-items-center justify-content-center"><svg width="17" height="17"><use href="#l-eye"/></svg></div>
      <div class="lbtn d-flex align-items-center justify-content-center"><svg width="17" height="17"><use href="#l-eyeg"/></svg></div>
      <div class="lbtn d-flex align-items-center justify-content-center"><svg width="15" height="17"><use href="#l-lockg"/></svg></div>
      <div class="lbtn d-flex align-items-center justify-content-center"><svg width="15" height="17"><use href="#l-lock"/></svg></div>
      <div class="lbtn d-flex align-items-center justify-content-center"><svg width="17" height="17"><use href="#l-add"/></svg></div>
      <div class="lbtn d-flex align-items-center justify-content-center"><svg width="17" height="17"><use href="#l-rem"/></svg></div>
      <div class="lbtn d-flex align-items-center justify-content-center"><svg width="17" height="17"><use href="#l-edit"/></svg></div>
    </div>
    <div class="layer-list">
      <div class="layer-row d-flex align-items-center">
        <div class="lcell d-flex align-items-center justify-content-center"><svg width="16" height="16"><use href="#l-eye"/></svg></div>
        <div class="lcell d-flex align-items-center justify-content-center"><svg width="15" height="16"><use href="#l-lockg"/></svg></div>
        <div class="lcell d-flex align-items-center justify-content-center"><svg width="16" height="16"><use href="#l-prn"/></svg></div>
        <div class="lcell d-flex align-items-center justify-content-center"><svg width="16" height="16"><use href="#l-hash"/></svg></div>
        <div class="lcell blk"></div>
        <span class="lname">0</span>
      </div>
    </div>
    <div class="dock-tabs d-flex align-items-start">
      <div class="dtab d-flex align-items-center" style="width:147px">Examinador de Biblioteca</div>
      <div class="dtab d-flex align-items-center" style="width:104px">Lista de bloques</div>
      <div class="dtab act d-flex align-items-center" style="width:99px">Lista de capas</div>
    </div>

    <div class="dock-title d-flex align-items-center"><span>Línea de comandos</span><svg width="11" height="11"><use href="#d-float"/></svg><svg width="11" height="11"><use href="#d-close"/></svg></div>
    <div class="cmd-out"></div>
    <div class="cmd-label">Comando:</div>
    <div class="cmd-in d-flex align-items-center">
      <div class="cmd-input"></div>
      <div class="mini d-flex align-items-center justify-content-center"><svg width="9" height="9"><path d="M1 1.500h7M1 4.500h7M1 7.500h7" stroke="#888" stroke-width="1.500"/></svg></div>
    </div>
  </aside>
</div>

<!-- circle + dock toolbar -->
<div class="bar3 d-flex align-items-center">
  <span class="grip"></span>
  <button class="btn tbtn"><svg width="28" height="28"><use href="#c1"/></svg></button>
  <button class="btn tbtn"><svg width="28" height="28"><use href="#c2"/></svg></button>
  <button class="btn tbtn"><svg width="28" height="28"><use href="#c3"/></svg></button>
  <button class="btn tbtn"><svg width="28" height="28"><use href="#c4"/></svg></button>
  <button class="btn tbtn"><svg width="28" height="28"><use href="#c5"/></svg></button>
  <button class="btn tbtn"><svg width="28" height="28"><use href="#c6"/></svg></button>
  <button class="btn tbtn"><svg width="28" height="28"><use href="#c7"/></svg></button>
  <button class="btn tbtn"><svg width="28" height="28"><use href="#c8"/></svg></button>
  <button class="btn tbtn"><svg width="28" height="28"><use href="#c9"/></svg></button>
  <span class="vline tall" style="margin:0 0 0 547px"></span><span class="grip" style="margin:2px 6px 4px 3px"></span>
  <button class="btn tbtn"><svg width="26" height="26"><use href="#m-left"/></svg></button>
  <button class="btn tbtn on"><svg width="26" height="26"><use href="#m-right"/></svg></button>
  <button class="btn tbtn"><svg width="26" height="26"><use href="#m-top"/></svg></button>
  <button class="btn tbtn"><svg width="26" height="26"><use href="#m-bot"/></svg></button>
  <button class="btn tbtn"><svg width="26" height="26"><use href="#m-ctr"/></svg></button>
  <span class="vline tall" style="margin:0 0 0 1px"></span><span class="grip" style="margin:2px 6px 4px 3px"></span>
  <button class="btn tbtn"><svg width="28" height="28"><use href="#a-list"/></svg></button>
  <button class="btn tbtn"><svg width="28" height="28"><use href="#a-tb"/></svg></button>
</div>

<!-- status bar -->
<div class="statusbar d-flex">
  <div class="scell" style="width:193px;padding-left:6px">
    <div class="srow">-162.0407 , 190.1277</div>
    <div class="srow">249.8114 &lt; 130.4400°</div>
  </div>
  <div class="scell" style="width:192px;padding-left:7px">
    <div class="srow d-flex"><span style="width:21px">@</span>-262.0407 , 220.1277</div>
    <div class="srow d-flex"><span style="width:21px">@</span>342.2302 &lt; 139.9680°</div>
  </div>
  <div class="scell d-flex justify-content-center" style="width:305px;padding-top:0">
    <svg width="54" height="58" viewBox="0 0 54 58" style="margin-left:2px;margin-top:7px"><path d="M1 21c6 4 9 0 11-8s8-13 16-11c5 1 7 4 7 9" fill="none" stroke="#111" stroke-width="1.500"/><rect x="20" y="13" width="30" height="42" rx="4" fill="#fff" stroke="#111" stroke-width="2"/><path d="M20 33h30M32 13v20M40 13v20" stroke="#111" stroke-width="1.500"/><rect x="32" y="14" width="8" height="19" fill="#00f57f"/></svg>
  </div>
  <div class="scell d-flex" style="width:148px;padding-left:5px">
    <div style="width:58px"><div class="srow">Selected</div><div class="srow">0</div></div>
    <div><div class="srow">Total Length</div><div class="srow">0</div></div>
  </div>
  <div class="scell" style="width:118px;padding-left:4px">
    <div class="srow">Current Layer</div><div class="srow">0</div>
  </div>
  <div class="scell" style="width:86px;padding-left:8px">
    <div class="srow">Grid Status</div><div class="srow">10 / 100</div>
  </div>
</div>

<!-- windows taskbar -->
<footer class="taskbar d-flex align-items-center">
  <svg class="win-logo" width="29" height="29" viewBox="0 0 29 29"><path d="M0 0h14v14H0z" fill="#4cc2ff"/><path d="M15 0h14v14H15z" fill="#2aa5ee"/><path d="M0 15h14v14H0z" fill="#1e90e0"/><path d="M15 15h14v14H15z" fill="#0c78d4"/></svg>
  <div class="pill d-flex align-items-center">
    <svg width="18" height="18" viewBox="0 0 18 18"><circle cx="7" cy="7" r="5.500" fill="none" stroke="#222" stroke-width="1.600"/><path d="M11 11l6 6" stroke="#222" stroke-width="1.800"/></svg>
    <span>Búsqueda</span>
  </div>
  <div class="tk d-flex align-items-center justify-content-center">
    <svg width="34" height="40" viewBox="0 0 34 40"><circle cx="14" cy="24" r="13" fill="#f08a1d"/><path d="M12 30a5 5 0 0 1 3-8 6 6 0 0 1 11 1 4 4 0 0 1 1 7z" fill="#bcd8f5"/><circle cx="23" cy="11" r="10" fill="#c42b1c"/><text x="23" y="15.500" font-size="13" font-weight="700" fill="#fff" text-anchor="middle" font-family="Liberation Sans">1</text></svg>
  </div>
  <div class="tk run d-flex align-items-center justify-content-center">
    <svg width="32" height="32" viewBox="0 0 32 32"><path d="M1 3h11l3 4h-14z" fill="#d89a16"/><path d="M1 7h30v25H1z" fill="#fcd34d"/><path d="M1 24h30v8H1z" fill="#f5b921"/><path d="M10 21h12v4H10z" fill="#1a79c9"/></svg>
  </div>
  <div class="tk run d-flex align-items-center justify-content-center">
    <svg width="31" height="31" viewBox="0 0 32 32"><circle cx="16" cy="16" r="15" fill="#e33b2e"/><path d="M16 16L29 9a15 15 0 0 1-9 21z" fill="#fbc02d"/><path d="M16 16l4 14A15 15 0 0 1 2 11z" fill="#2e9e4f"/><circle cx="16" cy="16" r="7.500" fill="#fff"/><circle cx="16" cy="16" r="5.500" fill="#3b78e7"/></svg>
  </div>
  <div class="tk d-flex align-items-center justify-content-center">
    <svg width="30" height="34" viewBox="0 0 30 34"><path d="M1 1h16v18H1z" fill="#f0f0f0" stroke="#ccc"/><path d="M3 3h9v9H3z" fill="none" stroke="#c8422a" stroke-width="2" stroke-dasharray="2 2"/><path d="M14 8l2 18M25 16L14 25" stroke="#8a8a8a" stroke-width="1.500"/><circle cx="27" cy="17" r="2.500" fill="none" stroke="#1e8ae0" stroke-width="1.500"/><circle cx="15" cy="30" r="2.500" fill="none" stroke="#1e8ae0" stroke-width="1.500"/></svg>
  </div>
  <div class="tk d-flex align-items-center justify-content-center">
    <svg width="31" height="31" viewBox="0 0 32 32"><circle cx="16" cy="16" r="15" fill="#fff"/><path d="M8 25c1-8 6-13 15-15-1 8-6 13-15 15z" fill="#ef7422"/><path d="M9 18c0-6 5-10 11-11-1 2-8 6-11 11z" fill="#2b2b2b"/><circle cx="14" cy="13" r="6" fill="#2b2b2b"/></svg>
  </div>
  <div class="tk run d-flex align-items-center justify-content-center">
    <svg width="31" height="36" viewBox="0 0 31 36"><path d="M23 1l7 3v28l-7 3L9 21l-5 4-3-2 6-5-6-5 3-2 5 4z" fill="#1e9be0"/><path d="M23 10v16l-9-8z" fill="#d8eefc"/><path d="M23 1l7 3v28l-7 3z" fill="#0f78c4"/></svg>
  </div>
  <div class="tk run d-flex align-items-center justify-content-center">
    <div class="d-flex align-items-center justify-content-center" style="width:28px;height:36px;background:#2a3fb0;border-radius:5px;color:#fff;font-weight:800;font-size:19px;font-family:'Liberation Sans',sans-serif">Ki</div>
  </div>
  <div class="tk d-flex align-items-center justify-content-center">
    <svg width="32" height="36" viewBox="0 0 32 36"><path d="M2 1h22v7H10v7h11v6H10v13H2z" fill="#c41e1e" stroke="#7a1010"/><circle cx="22" cy="25" r="7" fill="#4a78b4" stroke="#2c5288" stroke-width="3" stroke-dasharray="3 2"/><circle cx="22" cy="25" r="2.500" fill="#dbe6f2"/></svg>
  </div>
  <div class="tk run d-flex align-items-center justify-content-center">
    <svg width="30" height="34" viewBox="0 0 30 34"><path d="M7 0h21a2 2 0 0 1 2 2v30a2 2 0 0 1-2 2H7z" fill="#2b7cd3"/><path d="M7 8h23v9H7z" fill="#185abd"/><path d="M7 17h23v9H7z" fill="#0f4aa0"/><path d="M7 26h23v8H7z" fill="#103f91"/><rect y="9" width="15" height="15" rx="2" fill="#1d55b5"/><text x="7.500" y="21" font-size="12" font-weight="700" fill="#fff" text-anchor="middle" font-family="Liberation Sans">W</text></svg>
  </div>
  <div class="tk run d-flex align-items-center justify-content-center">
    <svg width="29" height="33" viewBox="0 0 29 33"><rect width="29" height="33" rx="5" fill="#b30b00"/><path d="M5 25c5-3 8-10 8-16 0-3 2-3 2 0 0 6 3 11 10 12-6 0-12 1-20 4z" fill="none" stroke="#fff" stroke-width="1.800"/></svg>
  </div>
  <div class="tk run d-flex align-items-center justify-content-center">
    <svg width="32" height="34" viewBox="0 0 32 34"><circle cx="18" cy="17" r="14" fill="#ed6c47"/><path d="M18 3a14 14 0 0 1 14 14H18z" fill="#ff8f6b"/><path d="M18 17h14a14 14 0 0 1-14 14z" fill="#d35230"/><rect y="10" width="15" height="15" rx="2" fill="#c43e1c"/><text x="7.500" y="22" font-size="12" font-weight="700" fill="#fff" text-anchor="middle" font-family="Liberation Sans">P</text></svg>
  </div>
  <div class="tk run d-flex align-items-center justify-content-center">
    <svg width="30" height="36" viewBox="0 0 30 36"><path d="M15 0l14 15c2 3-1 5-4 4l-3 3c-1 3-3 3-3 1s-3-1-4 1-1 6-3 5-1-4-3-5-4 1-5-2 2-3-1-4-4-3-2-5z" fill="#111"/><path d="M15 1l6 7-3 1-2 2-3-2-4 2z" fill="#ddd"/></svg>
  </div>
  <div class="tk cur d-flex align-items-center justify-content-center">
    <svg width="32" height="30" viewBox="0 0 32 30"><rect x="1" y="1" width="30" height="28" fill="#fff"/><ellipse cx="16" cy="15" rx="12" ry="12.500" fill="none" stroke="#8ccb0e" stroke-width="3"/><path d="M1 12h6v7H1z" fill="#4a4a4a"/><path d="M7 13.500h24v3.500H7z" fill="#4a4a4a"/><path d="M1 1h3v3H1zM28 1h3v3h-3zM1 26h3v3H1zM28 26h3v3h-3z" fill="#8ccb0e"/></svg>
  </div>

  <div class="tray d-flex align-items-center">
    <svg width="16" height="10" viewBox="0 0 16 10" style="margin-right:22px"><path d="M2 9l6-6 6 6" fill="none" stroke="#111" stroke-width="1.600"/></svg>
    <svg width="21" height="25" viewBox="0 0 21 25" style="margin-right:22px"><circle cx="12" cy="9" r="6.500" fill="none" stroke="#e8710a" stroke-width="3.500"/><path d="M7 14l-5 8" stroke="#e8710a" stroke-width="3.500" stroke-linecap="round"/></svg>
    <svg width="16" height="25" viewBox="0 0 16 25" style="margin-right:7px"><path d="M3 1h7v6H3zM2 7h9v17H2z" fill="#fff" stroke="#111"/><path d="M5 3h1M8 3h1" stroke="#111"/><path d="M9 22l2 2 4-6" fill="none" stroke="#555"/></svg>
    <div class="lang">ESP<br>LAA</div>
    <svg width="21" height="18" viewBox="0 0 21 18" style="margin-left:7px;margin-right:8px"><path d="M1 6c6-6 13-6 19 0M4 9.500c4-4 9-4 13 0M7 13c2-2 5-2 7 0" fill="none" stroke="#111" stroke-width="1.300"/><circle cx="10.500" cy="16" r="1.500" fill="#111"/></svg>
    <svg width="21" height="18" viewBox="0 0 21 18" style="margin-right:9px"><path d="M1 6h4l5-4v14l-5-4H1z" fill="none" stroke="#111"/><path d="M13 5c2 2 2 6 0 8M16 3c3 3 3 9 0 12" fill="none" stroke="#111"/><path d="M19 2c3 4 3 10 0 14" fill="none" stroke="#aaa"/></svg>
    <svg width="22" height="20" viewBox="0 0 22 20" style="margin-right:8px"><rect x="2" y="6" width="16" height="12" rx="2" fill="#222"/><path d="M19 10h2v4h-2z" fill="#222"/><path d="M4 0l-3 6h3l-2 6 6-8H5l2-4z" fill="#222" stroke="#d8d8d8" stroke-width=".5"/></svg>
    <div class="clock">1:56 p.m.<br>02/10/2024</div>
    <svg class="ms-2" width="17" height="23" viewBox="0 0 17 23" style="margin-right:27px"><path d="M8.500 1c4 0 6 3 6 7v6l2 3H0l2-3V8c0-4 2-7 6.500-7z" fill="#0b3d91"/><path d="M5 18h7c0 3-2 4-3.500 4S5 21 5 18z" fill="#0b3d91"/></svg>
  </div>
</footer>

<!-- spline flyout -->
<ul class="dropdown-menu show cad-popup">
  <li><a class="dropdown-item"><span class="pop-ico"><svg width="20" height="20"><use href="#p-arc"/></svg></span>Center, Point, Angles</a></li>
  <li><a class="dropdown-item"><span class="pop-ico"><svg width="20" height="20"><use href="#p-2p"/></svg></span>2 puntos {3 ?}</a></li>
  <li><a class="dropdown-item"><span class="pop-ico"><svg width="20" height="20"><use href="#p-tan"/></svg></span>Arc Tangential</a></li>
  <li><a class="dropdown-item"><span class="pop-ico"><svg width="20" height="20"><use href="#p-curv"/></svg></span>Curva</a></li>
  <li><a class="dropdown-item active"><span class="pop-ico"><svg width="20" height="20"><use href="#p-spl"/></svg></span>Spline through points</a></li>
  <li><a class="dropdown-item"><span class="pop-ico"><svg width="20" height="20"><use href="#p-ela"/></svg></span>Ellipse Arc (Axis)</a></li>
  <li><a class="dropdown-item"><span class="pop-ico"><svg width="20" height="20"><use href="#p-free"/></svg></span>Freehand Line</a></li>
</ul>

<script src="https://cdn.jsdelivr.net/npm/bootstrap@5.3.0/dist/js/bootstrap.bundle.min.js"></script>
<script>
  // cad grid: origin at the red crosshair, 18.52 between dots, major lines every 10
  const W = 1497, H = 769, ox = 302.3, oy = 449.3, step = 18.52;
  const dot = (x, y) => `M${Math.round(x)} ${Math.round(y)}h1v1h-1z`;
  let minor = '', majV = '', majH = '';
  for (let i = -17; i < 65; i++)
    for (let j = -25; j < 18; j++) minor += dot(ox + i * step, oy + j * step);
  for (let i = -1; i < 7; i++)
    for (let y = 0; y < H; y += step / 5) majV += dot(ox + i * step * 10, y);
  for (let j = -2; j < 2; j++)
    for (let x = 0; x < W; x += step / 5) majH += dot(x, oy + j * step * 10);
  document.getElementById('gridMinor').setAttribute('d', minor);
  document.getElementById('gridMajV').setAttribute('d', majV);
  document.getElementById('gridMajH').setAttribute('d', majH);
</script>
</body>
</html>
